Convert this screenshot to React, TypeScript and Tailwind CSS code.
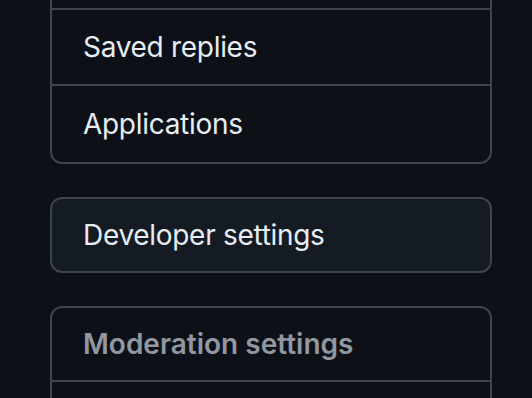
import React from "react";

const font = { fontFamily: "Inter, 'Noto Sans', 'Liberation Sans', sans-serif" };

function Row({ label }: { label: string }) {
  return (
    <div className="flex h-[76px] items-center px-[31px] text-[28px] tracking-[-0.3px] text-[#e6edf3]">
      {label}
    </div>
  );
}

export default function App() {
  return (
    <div className="h-[398px] w-full overflow-hidden bg-[#0d1117]" style={font}>
      <div className="-mt-[68px] flex flex-col gap-[33px] pl-[50px] pr-[40px]">
        {/* Settings group */}
        <div className="divide-y-2 divide-[#3d444d] rounded-[12px] border-2 border-[#3d444d]">
          <Row label="Pages" />
          <Row label="Saved replies" />
          <Row label="Applications" />
        </div>

        {/* Developer settings */}
        <div className="rounded-[12px] border-2 border-[#3d444d] bg-[#151b23]">
          <div className="flex h-[72px] items-center px-[31px] text-[28px] tracking-[-0.3px] text-[#e6edf3]">
            Developer settings
          </div>
        </div>

        {/* Moderation */}
        <div className="divide-y-2 divide-[#3d444d] rounded-[12px] border-2 border-[#3d444d]">
          <div className="flex h-[74px] items-center px-[31px] text-[28px] font-semibold text-[#9198a1]">
            Moderation settings
          </div>
          <Row label="Blocked users" />
        </div>
      </div>
    </div>
  );
}
